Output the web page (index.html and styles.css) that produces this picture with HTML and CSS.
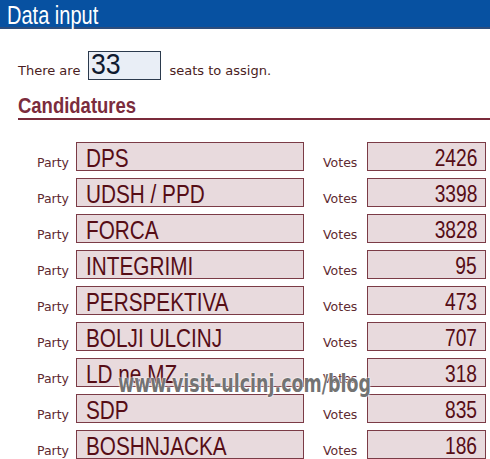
FILE: index.html
```html
<!DOCTYPE html>
<html>
<head>
<meta charset="utf-8">
<link rel="stylesheet" href="styles.css">
</head>
<body>
<div class="header"><span class="narrow">Data input</span></div>
<div class="seats">
  <span class="lbl">There are</span>
  <span class="seatbox"><span class="narrow">33</span></span>
  <span class="lbl">seats to assign.</span>
</div>
<h2 class="section"><span class="narrow">Candidatures</span></h2>
<div class="rows">
  <div class="row"><span class="plbl">Party</span><span class="pbox"><span class="narrow">DPS</span></span><span class="vlbl">Votes</span><span class="vbox"><span class="narrow-r">2426</span></span></div>
  <div class="row"><span class="plbl">Party</span><span class="pbox"><span class="narrow">UDSH / PPD</span></span><span class="vlbl">Votes</span><span class="vbox"><span class="narrow-r">3398</span></span></div>
  <div class="row"><span class="plbl">Party</span><span class="pbox"><span class="narrow">FORCA</span></span><span class="vlbl">Votes</span><span class="vbox"><span class="narrow-r">3828</span></span></div>
  <div class="row"><span class="plbl">Party</span><span class="pbox"><span class="narrow">INTEGRIMI</span></span><span class="vlbl">Votes</span><span class="vbox"><span class="narrow-r">95</span></span></div>
  <div class="row"><span class="plbl">Party</span><span class="pbox"><span class="narrow">PERSPEKTIVA</span></span><span class="vlbl">Votes</span><span class="vbox"><span class="narrow-r">473</span></span></div>
  <div class="row"><span class="plbl">Party</span><span class="pbox"><span class="narrow">BOLJI ULCINJ</span></span><span class="vlbl">Votes</span><span class="vbox"><span class="narrow-r">707</span></span></div>
  <div class="row"><span class="plbl">Party</span><span class="pbox"><span class="narrow">LD ne MZ</span></span><span class="vlbl">Votes</span><span class="vbox"><span class="narrow-r">318</span></span></div>
  <div class="row"><span class="plbl">Party</span><span class="pbox"><span class="narrow">SDP</span></span><span class="vlbl">Votes</span><span class="vbox"><span class="narrow-r">835</span></span></div>
  <div class="row"><span class="plbl">Party</span><span class="pbox"><span class="narrow">BOSHNJACKA</span></span><span class="vlbl">Votes</span><span class="vbox"><span class="narrow-r">186</span></span></div>
  <div class="watermark"><span class="narrow">www.visit-ulcinj.com/blog</span></div>
</div>
</body>
</html>
```
FILE: styles.css
```css
html, body {
  margin: 0;
  padding: 0;
  background: #ffffff;
  overflow: hidden;
}
body {
  width: 490px;
  height: 459px;
  font-family: "Liberation Sans", Arial, sans-serif;
}
.narrow {
  display: inline-block;
  white-space: nowrap;
  transform-origin: left center;
}
.narrow-r {
  display: inline-block;
  white-space: nowrap;
  transform-origin: right center;
  transform: scaleX(0.8);
}
.header {
  height: 25px;
  padding-top: 2px;
  background: #0751a1;
  border-bottom: 2px solid #2d4d7c;
  color: #ffffff;
  font-size: 26px;
  line-height: 27px;
  padding-left: 7px;
}
.header .narrow {
  transform: scaleX(0.77);
}
.seats {
  display: flex;
  align-items: flex-end;
  margin-top: 22px;
  padding-left: 18px;
  height: 29px;
}
.lbl {
  font-family: "DejaVu Sans", Verdana, sans-serif;
  font-size: 13px;
  color: #4a1d22;
  line-height: 15px;
  padding-bottom: 2px;
}
.seatbox {
  box-sizing: border-box;
  width: 73px;
  height: 29px;
  margin: 0 8px 0 8px;
  background: #e9eef6;
  border: 1px solid #2b3a4d;
  font-size: 29px;
  line-height: 24px;
  color: #0f1a30;
  padding-left: 2px;
}
.seatbox .narrow {
  transform: scaleX(0.92);
}
.section {
  margin: 16px 0 0 18px;
  font-size: 22px;
  font-weight: bold;
  color: #7b2c3d;
  line-height: 20px;
  padding-bottom: 2px;
  border-bottom: 2px solid #7a2a3a;
}
.section .narrow {
  transform: scaleX(0.84);
}
.rows {
  position: relative;
  margin-top: 22px;
  display: flex;
  flex-direction: column;
  gap: 7px;
}
.row {
  display: grid;
  grid-template-columns: 76px 228px 63px 119px;
  align-items: end;
  height: 29px;
}
.plbl, .vlbl {
  font-family: "DejaVu Sans", Verdana, sans-serif;
  font-size: 12.5px;
  color: #5e2a31;
  line-height: 15px;
  padding-bottom: 1px;
}
.plbl {
  text-align: right;
  padding-right: 7px;
}
.vlbl {
  padding-left: 19px;
}
.pbox, .vbox {
  box-sizing: border-box;
  height: 29px;
  padding-top: 2px;
  background: #e8dadd;
  border: 1px solid #7b3b46;
  line-height: 26px;
  color: #560d16;
  overflow: hidden;
  white-space: nowrap;
}
.pbox {
  font-size: 25px;
  padding-left: 9px;
}
.pbox .narrow {
  transform: scaleX(0.83);
}
.vbox {
  font-size: 24px;
  text-align: right;
  padding-right: 8px;
}
.watermark {
  position: absolute;
  left: 118px;
  top: 228px;
  font-family: "DejaVu Sans", Verdana, sans-serif;
  font-size: 24px;
  line-height: 28px;
  font-weight: bold;
  color: rgba(90, 90, 90, 0.85);
  text-shadow: 0 0 2px #ffffff, 0 0 2px #ffffff;
  white-space: nowrap;
}
.watermark .narrow {
  transform: scaleX(0.728);
}
```
